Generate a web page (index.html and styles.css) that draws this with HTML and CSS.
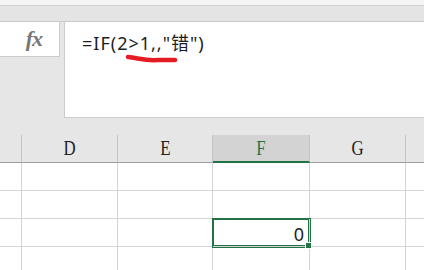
FILE: index.html
```html
<!DOCTYPE html>
<html lang="zh">
<head>
    <meta charset="UTF-8">
    <title>IF</title>
    <link rel="stylesheet" href="styles.css">
</head>
<body>
    <div class="app">
        <div class="top-strip"></div>
        <div class="ribbon-edge"></div>

        <!-- Barra de fórmulas -->
        <div class="formula-bar">
            <div class="fx-box"><span class="fx">fx</span></div>
            <div class="formula-input">
                <span class="formula-text">=IF(2&gt;1,,"错")</span>
                <svg class="mark" width="60" height="12" viewBox="0 0 60 12">
                    <path d="M4 4 C 14 5, 22 8, 34 7 C 42 7, 48 7, 51 7" stroke="#e51b23" stroke-width="4.5" fill="none" stroke-linecap="round"/>
                </svg>
            </div>
        </div>

        <!-- Hoja -->
        <div class="sheet">
            <div class="hd"></div>
            <div class="hd"><span>D</span></div>
            <div class="hd"><span>E</span></div>
            <div class="hd active-col"><span>F</span></div>
            <div class="hd"><span>G</span></div>
            <div class="hd last"></div>

            <div class="c"></div><div class="c"></div><div class="c"></div><div class="c"></div><div class="c"></div><div class="c last"></div>
            <div class="c"></div><div class="c"></div><div class="c"></div><div class="c"></div><div class="c"></div><div class="c last"></div>
            <div class="c"></div><div class="c"></div><div class="c"></div><div class="c selected"><span>0</span><i class="handle"></i></div><div class="c"></div><div class="c last"></div>
            <div class="c"></div><div class="c"></div><div class="c"></div><div class="c"></div><div class="c"></div><div class="c last"></div>
        </div>
    </div>
</body>
</html>
```
FILE: styles.css
```css
body {
    margin: 0;
    background: #ffffff;
    font-family: 'Noto Sans', 'Noto Sans CJK SC', sans-serif;
}
.app {
    width: 424px;
    height: 270px;
    overflow: hidden;
    background: #e6e6e6;
}
.top-strip {
    height: 5px;
    background: #f4f4f4;
    border-bottom: 1px solid #d2d2d2;
}
.ribbon-edge {
    height: 15px;
    background: #e4e4e4;
    border-bottom: 1px solid #c9c9c9;
}
.formula-bar {
    display: flex;
    gap: 4px;
    height: 96px;
    background: #e6e6e6;
}
.fx-box {
    width: 60px;
    height: 35px;
    background: #ffffff;
    border-right: 1px solid #cccccc;
    border-bottom: 1px solid #cccccc;
    display: flex;
    justify-content: flex-end;
    align-items: center;
    padding-right: 17px;
    box-sizing: border-box;
}
.fx {
    font-family: 'Liberation Serif', serif;
    font-style: italic;
    font-weight: bold;
    font-size: 22px;
    color: #777777;
    letter-spacing: -1px;
}
.formula-input {
    flex: 1;
    position: relative;
    background: #ffffff;
    border-left: 1px solid #cccccc;
    border-bottom: 1px solid #cccccc;
    padding: 7px 0 0 17px;
}
.formula-text {
    font-size: 18px;
    color: #1e1e1e;
    letter-spacing: 1px;
}
.mark {
    position: absolute;
    left: 59px;
    top: 31px;
}
.sheet {
    margin-top: 17px;
    display: grid;
    grid-template-columns: 22px 96px 95px 97px 96px 18px;
    grid-auto-rows: 28px;
}
.hd {
    background: #e6e6e6;
    border-right: 1px solid #c4c4c4;
    border-bottom: 1px solid #9e9e9e;
    display: flex;
    justify-content: center;
    align-items: center;
    font-family: 'Liberation Serif', serif;
    font-size: 21px;
    color: #222222;
}
.hd span {
    display: inline-block;
    transform: scaleX(0.8);
}
.hd.active-col {
    background: #d3d3d3;
    color: #217346;
    border-bottom: 2px solid #217346;
}
.c {
    background: #ffffff;
    border-right: 1px solid #d4d4d4;
    border-bottom: 1px solid #d4d4d4;
}
.last {
    border-right: none;
}
.c.selected {
    position: relative;
    display: flex;
    justify-content: flex-end;
    align-items: center;
    padding: 2px 5px 0 0;
    box-shadow: 0 0 0 1px #217346, inset 0 0 0 1px #217346;
    font-size: 18px;
    color: #1e1e1e;
}
.handle {
    position: absolute;
    right: -3px;
    bottom: -3px;
    width: 5px;
    height: 5px;
    background: #217346;
    border: 1px solid #ffffff;
}
```
